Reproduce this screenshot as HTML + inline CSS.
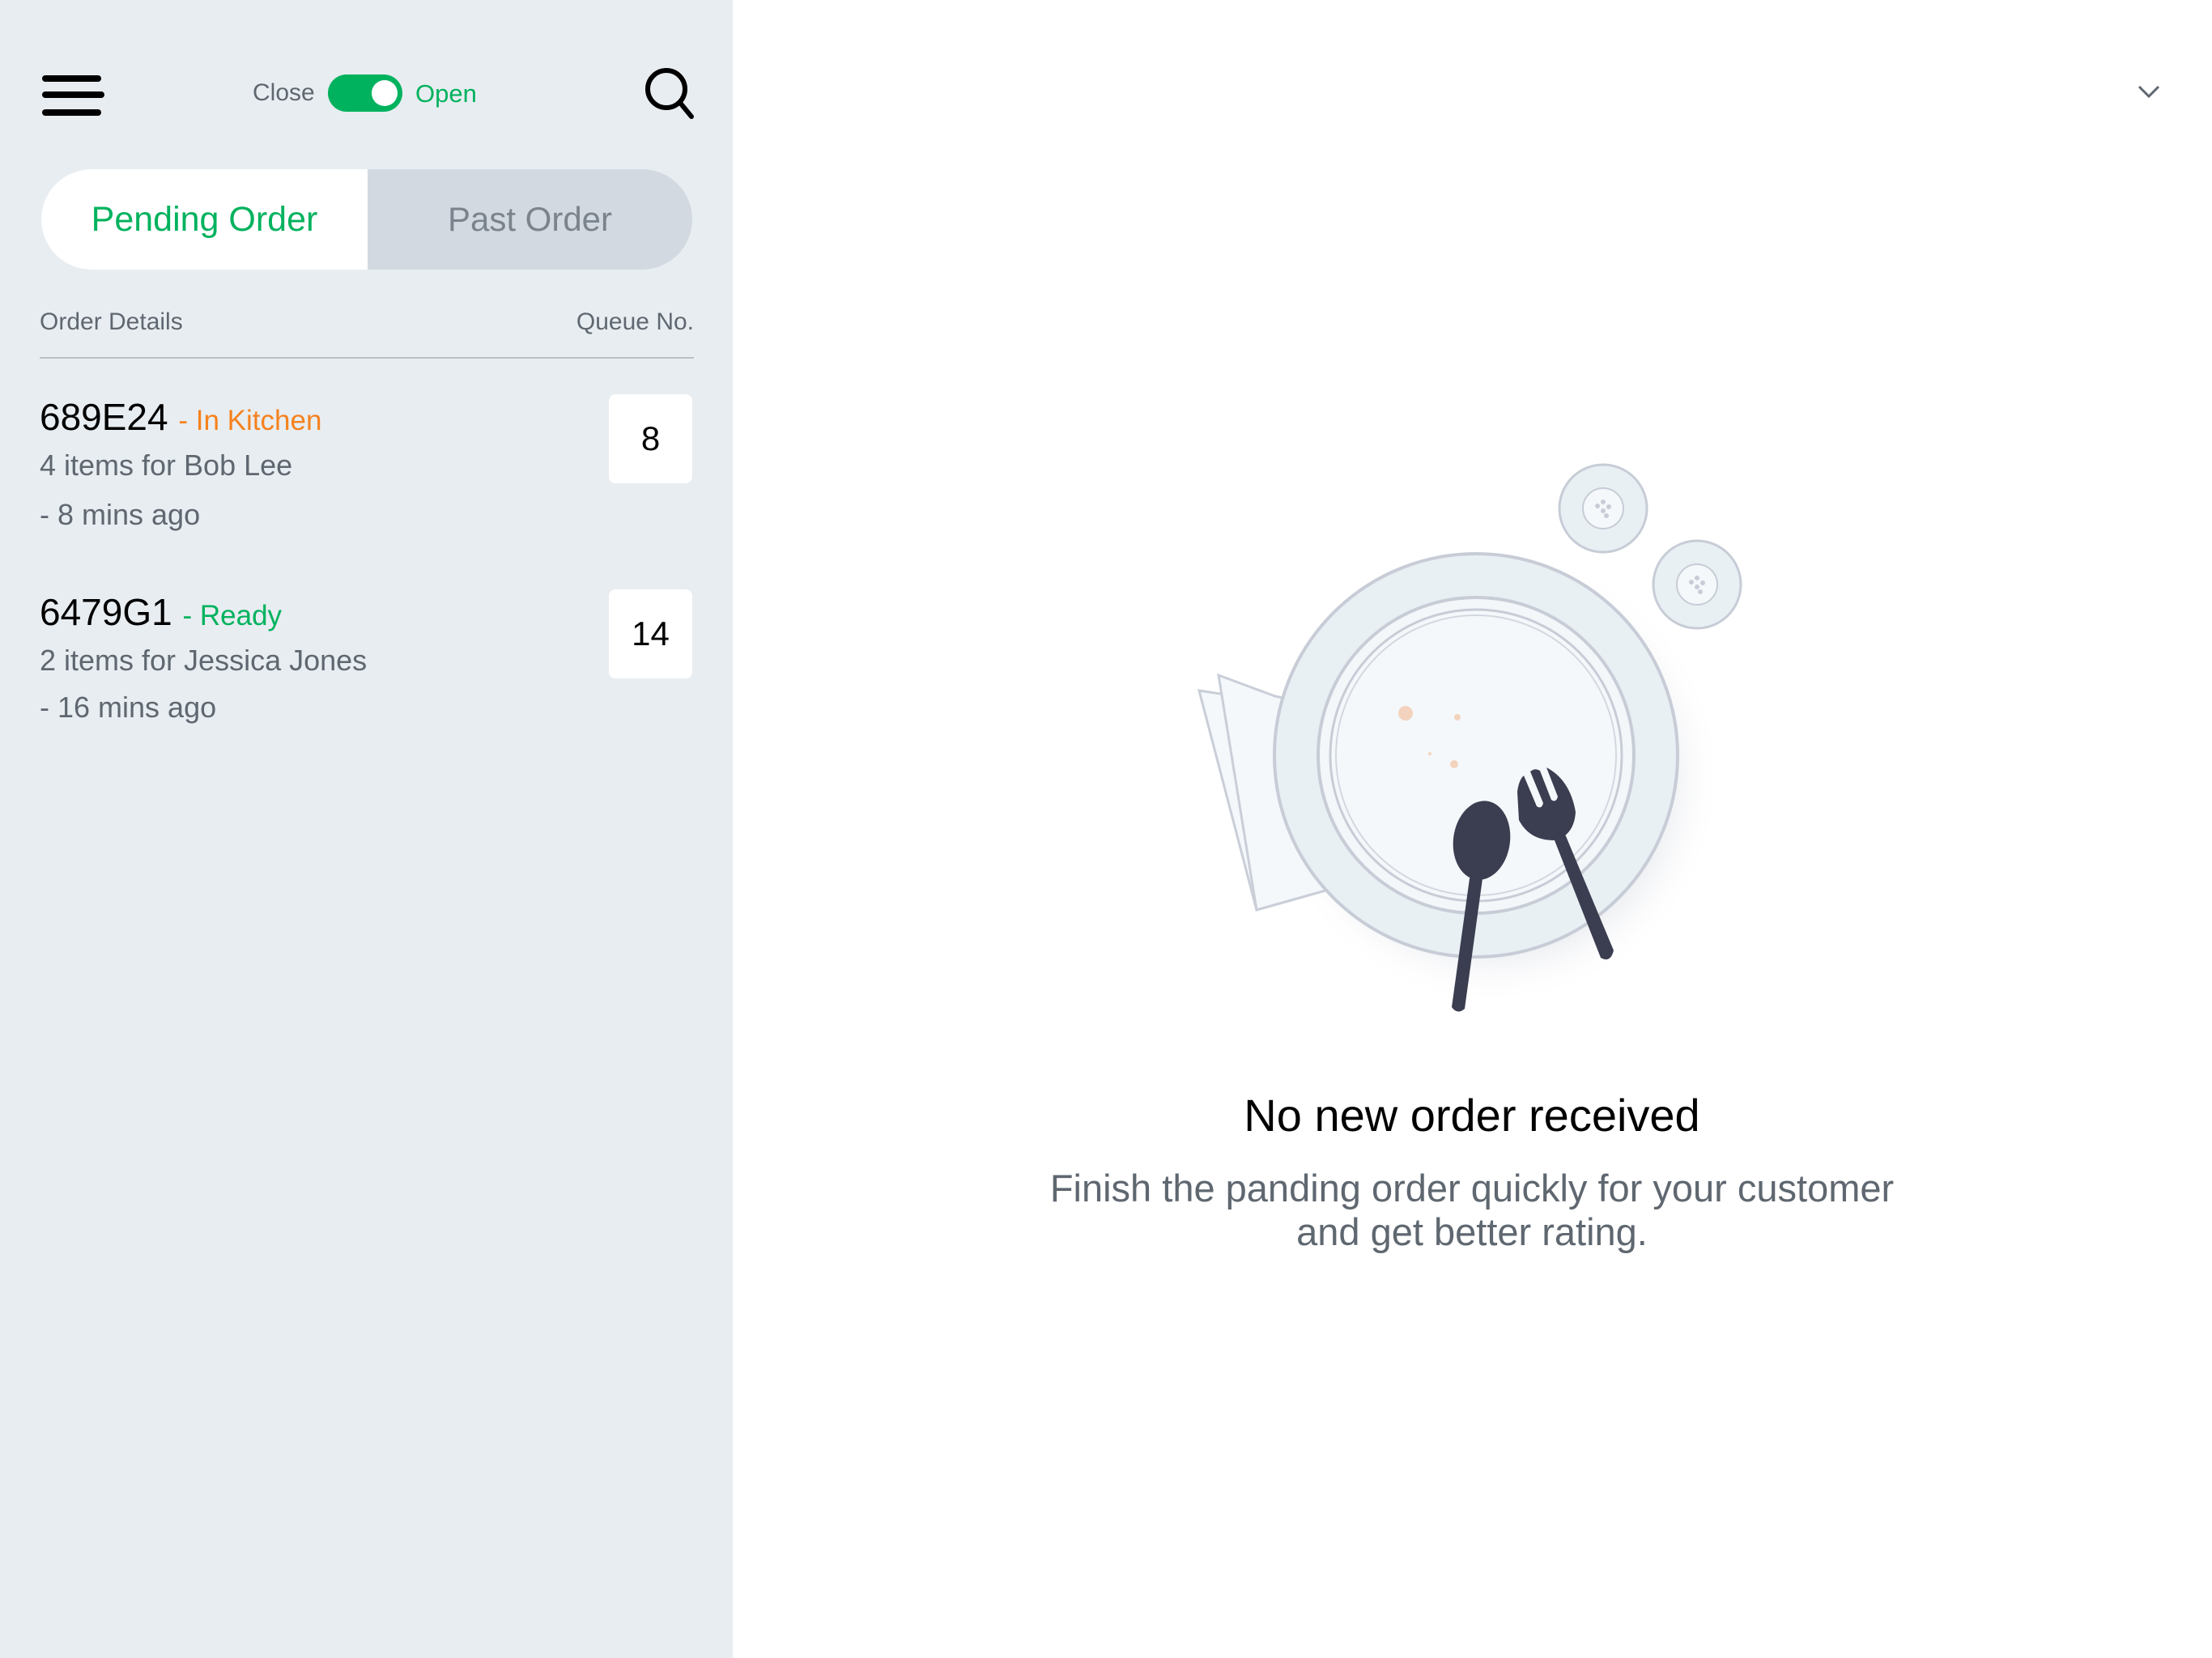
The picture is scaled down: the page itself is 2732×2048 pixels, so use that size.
<!DOCTYPE html>
<html><head><meta charset="utf-8"><style>
*{margin:0;padding:0;box-sizing:border-box}
body{width:2732px;height:2048px;position:relative;background:#fff;font-family:"Liberation Sans",sans-serif;overflow:hidden}
.side{position:absolute;left:0;top:0;width:905px;height:2048px;background:#e8edf1}
.a{position:absolute;white-space:nowrap}
.bar{position:absolute;left:52px;height:8px;border-radius:4px;background:#000}
.box{position:absolute;left:752px;width:103px;height:110px;background:#fff;border-radius:8px;font-size:42px;color:#000;display:flex;align-items:center;justify-content:center}
.gray{color:#5f6770}
</style></head><body>
<div class="side">
  <div class="bar" style="top:93px;width:73px"></div>
  <div class="bar" style="top:113px;width:77px"></div>
  <div class="bar" style="top:135px;width:73px"></div>
  <div class="a gray" style="left:312px;top:98px;font-size:30px">Close</div>
  <div class="a" style="left:405px;top:92px;width:92px;height:46px;border-radius:23px;background:#00b25e"></div>
  <div class="a" style="left:459px;top:99px;width:32px;height:32px;border-radius:50%;background:#fff"></div>
  <div class="a" style="left:513px;top:98px;font-size:31px;color:#00b25e">Open</div>
  <svg class="a" style="left:790px;top:78px" width="80" height="72" viewBox="0 0 80 72"><circle cx="33" cy="32" r="23" fill="none" stroke="#000" stroke-width="6"/><line x1="50" y1="49" x2="64" y2="66" stroke="#000" stroke-width="6" stroke-linecap="round"/></svg>
  <div class="a" style="left:51px;top:209px;width:804px;height:124px;border-radius:62px;background:#d2d9e1;overflow:hidden">
    <div style="position:absolute;left:0;top:0;width:403px;height:124px;background:#fff"></div>
    <div class="a" style="left:0;width:403px;top:0;line-height:124px;text-align:center;font-size:43px;color:#00b25e">Pending Order</div>
    <div class="a" style="left:403px;width:401px;top:0;line-height:124px;text-align:center;font-size:42px;color:#7b838c">Past Order</div>
  </div>
  <div class="a gray" style="left:49px;top:381px;font-size:30px">Order Details</div>
  <div class="a gray" style="right:48px;top:381px;font-size:30px">Queue No.</div>
  <div class="a" style="left:49px;top:441px;width:808px;height:2px;background:#b9c0c8"></div>

  <div class="a" style="left:49px;top:488px;font-size:46px;color:#000">689E24 <span style="font-size:35px;color:#f5821f">- In Kitchen</span></div>
  <div class="a gray" style="left:49px;top:554px;font-size:36px">4 items for Bob Lee</div>
  <div class="a gray" style="left:49px;top:615px;font-size:36px">- 8 mins ago</div>
  <div class="box" style="top:487px">8</div>

  <div class="a" style="left:49px;top:729px;font-size:46px;color:#000">6479G1 <span style="font-size:35px;color:#00b25e">- Ready</span></div>
  <div class="a gray" style="left:49px;top:795px;font-size:36px">2 items for Jessica Jones</div>
  <div class="a gray" style="left:49px;top:853px;font-size:36px">- 16 mins ago</div>
  <div class="box" style="top:728px">14</div>
</div>

<svg class="a" style="left:2640px;top:104px" width="30" height="20" viewBox="0 0 30 20"><polyline points="2,3 14,15 26,3" fill="none" stroke="#5f6770" stroke-width="3"/></svg>

<svg class="a" style="left:0;top:0" width="2732" height="2048" viewBox="0 0 2732 2048">
  <defs><radialGradient id="sh" cx="0.5" cy="0.5" r="0.5"><stop offset="0.7" stop-color="#d9dce3" stop-opacity="0.7"/><stop offset="1" stop-color="#fff" stop-opacity="0"/></radialGradient></defs>
  <g transform="translate(-5,-15)">
  <circle cx="1850" cy="975" r="282" fill="url(#sh)"/>
  <polygon points="1486,868 1557,1139 1642,1115 1610,887" fill="#f4f8fb" stroke="#c9ced8" stroke-width="3"/>
  <polygon points="1510,849 1557,1139 1642,1115 1640,887 1580,875" fill="#f4f8fb" stroke="#c9ced8" stroke-width="3"/>
  <circle cx="1828" cy="948" r="249" fill="#e9f0f4" stroke="#c7ccd6" stroke-width="4"/>
  <circle cx="1828" cy="948" r="195" fill="#f3f7fa" stroke="#c7ccd6" stroke-width="4"/>
  <circle cx="1828" cy="948" r="180" fill="#f5f8fb" stroke="#c7ccd6" stroke-width="3"/>
  <circle cx="1828" cy="948" r="173" fill="none" stroke="#d3d8e0" stroke-width="2"/>
  </g>
  <g transform="translate(-8,-3)">
  <circle cx="1988" cy="631" r="54" fill="#e9f0f4" stroke="#c7ccd6" stroke-width="3"/>
  <circle cx="1988" cy="631" r="25" fill="#f5f8fb" stroke="#c7ccd6" stroke-width="2"/>
  <circle cx="2104" cy="725" r="54" fill="#e9f0f4" stroke="#c7ccd6" stroke-width="3"/>
  <circle cx="2104" cy="725" r="25" fill="#f5f8fb" stroke="#c7ccd6" stroke-width="2"/>
  <g fill="#c7ccd6"><circle cx="1981" cy="628" r="3"/><circle cx="1988" cy="623" r="3"/><circle cx="1988" cy="634" r="3"/><circle cx="1995" cy="629" r="3"/><circle cx="1992" cy="640" r="3"/>
  <circle cx="2097" cy="722" r="3"/><circle cx="2104" cy="717" r="3"/><circle cx="2104" cy="728" r="3"/><circle cx="2111" cy="723" r="3"/><circle cx="2108" cy="734" r="3"/></g>
  </g>
  <g transform="translate(-5,-15)">
  <g fill="#f3d3bd"><circle cx="1741" cy="896" r="9"/><circle cx="1805" cy="901" r="4"/><circle cx="1771" cy="946" r="2"/><circle cx="1801" cy="959" r="5"/></g>
  </g>
  <g fill="#3b3d50" transform="translate(-6,-22)">
    <ellipse cx="1836" cy="1060" rx="35" ry="49" transform="rotate(8 1836 1060)"/>
    <path d="M1822,1100 L1838,1100 L1815,1268 Q1806,1276 1799,1266 Z"/>
    <path d="M1880,1000 Q1882,985 1888,980 L1904,1018 Q1910,1022 1912,1014 L1896,975 Q1902,970 1908,974 L1922,1010 Q1928,1014 1930,1006 L1916,970 Q1945,985 1952,1025 Q1950,1055 1925,1060 Q1895,1060 1882,1035 Z"/>
    <path d="M1924,1055 L1938,1050 L1999,1196 Q1995,1212 1983,1205 Z"/>
  </g>
</svg>

<div class="a" style="left:1218px;width:1200px;top:1345px;text-align:center;font-size:56px;color:#000">No new order received</div>
<div class="a" style="left:1118px;width:1400px;top:1441px;text-align:center;font-size:47px;line-height:54px;color:#5f6770">Finish the panding order quickly for your customer<br>and get better rating.</div>
</body></html>
